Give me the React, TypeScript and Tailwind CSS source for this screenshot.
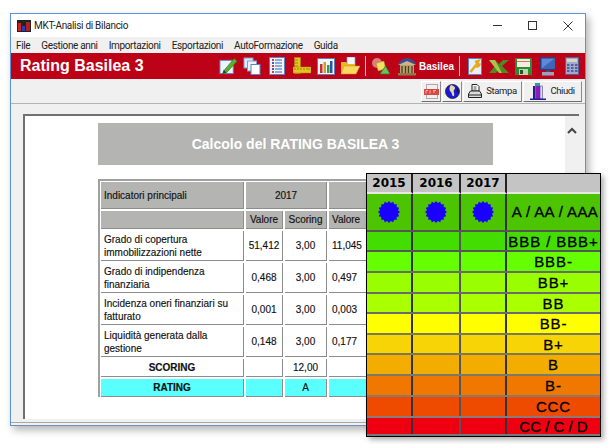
import React from "react";

const Star = () => {
  const pts: string[] = [];
  for (let i = 0; i < 32; i++) {
    const r = i % 2 === 0 ? 11 : 9.2;
    const a = (i * Math.PI) / 16;
    pts.push(`${12 + r * Math.sin(a)},${12 - r * Math.cos(a)}`);
  }
  return (
    <svg width="24" height="24" viewBox="0 0 24 24">
      <polygon points={pts.join(" ")} fill="#1a00ff" />
    </svg>
  );
};

const AppLogo = () => (
  <svg width="14" height="12" viewBox="0 0 14 12">
    <rect x="0" y="0" width="14" height="12" fill="#222" />
    <rect x="1" y="3" width="3" height="8" fill="#d02020" />
    <rect x="5" y="6" width="3" height="5" fill="#1f3fc0" />
    <rect x="9" y="2" width="4" height="9" fill="#b02020" />
  </svg>
);

const PencilIcon = () => (
  <svg width="19" height="18" viewBox="0 0 20 18">
    <rect x="1" y="3" width="14" height="14" fill="#eef4fb" stroke="#5b84c4" />
    <path d="M5 14 L16 1 L19 4 L8 16 L4 17 Z" fill="#58b030" stroke="#2c6a14" strokeWidth="0.6" />
    <path d="M4 17 L5 13 L8 16 Z" fill="#3a3a2a" />
  </svg>
);
const CopiesIcon = () => (
  <svg width="18" height="18" viewBox="0 0 18 18">
    <rect x="1" y="1" width="9" height="10" fill="#dfe9f7" stroke="#7d9fd3" />
    <rect x="4.5" y="4" width="9" height="10" fill="#eaf1fb" stroke="#7d9fd3" />
    <rect x="8" y="7.5" width="9" height="10" fill="#ffffff" stroke="#5b84c4" />
  </svg>
);
const ListIcon = () => (
  <svg width="16" height="18" viewBox="0 0 16 18">
    <rect x="0.5" y="0.5" width="15" height="17" fill="#eef4fb" stroke="#5b84c4" />
    {[3, 6, 9, 12, 15].map((y) => (
      <g key={y}>
        <rect x="3" y={y - 1} width="2" height="2" fill={y % 2 ? "#d04030" : "#3060c0"} />
        <rect x="6" y={y - 0.5} width="7" height="1" fill="#3060c0" />
      </g>
    ))}
  </svg>
);
const RulerIcon = () => (
  <svg width="18" height="18" viewBox="0 0 18 18">
    <rect x="1.5" y="0.5" width="6" height="16" fill="#e4c420" stroke="#a88a10" strokeWidth="0.5" />
    <rect x="0" y="10" width="18" height="6" fill="#e4c420" stroke="#a88a10" strokeWidth="0.5" />
    <path d="M2 11v2M5 11v2M8 11v2M11 11v2M14 11v2M16 11v2M2 3h3M2 6h3M2 9h3" stroke="#8a6e10" strokeWidth="0.7" />
  </svg>
);
const ChartIcon = () => (
  <svg width="18" height="17" viewBox="0 0 18 17">
    <rect x="0.5" y="0.5" width="17" height="16" fill="#f4f6fb" stroke="#5b7fb8" />
    <rect x="3" y="6" width="2.5" height="9" fill="#c03030" />
    <rect x="6.5" y="4" width="2.5" height="11" fill="#d0a020" />
    <rect x="10" y="7" width="2.5" height="8" fill="#30a040" />
    <rect x="13" y="3" width="2.5" height="12" fill="#3050b0" />
  </svg>
);
const FolderIcon = () => (
  <svg width="20" height="18" viewBox="0 0 20 18">
    <rect x="7" y="0" width="8" height="10" fill="#f4f7fc" stroke="#7d9fd3" strokeWidth="0.7" />
    <path d="M1 5h5l2 2h7v9H1Z" fill="#e8b828" />
    <path d="M1 17 L4 9 H20 L16 17 Z" fill="#fbd860" stroke="#c09818" strokeWidth="0.5" />
  </svg>
);
const ShapesIcon = () => (
  <svg width="20" height="18" viewBox="0 0 20 18">
    <circle cx="6" cy="6" r="5" fill="#d88078" />
    <rect x="6" y="5" width="8" height="8" fill="#f2e060" stroke="#a09030" strokeWidth="0.5" transform="rotate(-15 10 9)" />
    <path d="M9 17 L14.5 9 L19 17 Z" fill="#70c060" stroke="#2c7a24" strokeWidth="0.7" />
  </svg>
);
const BankIcon = () => (
  <svg width="20" height="19" viewBox="0 0 20 19">
    <path d="M1 8 C2 4 6 1 10 1 C14 1 18 4 19 8 Z" fill="#3e4a8a" />
    <path d="M1 8 L10 4 L19 8 Z" fill="#c8b888" />
    <rect x="3" y="8" width="14" height="8" fill="#b8a070" />
    <path d="M5 9v7M8.5 9v7M11.5 9v7M15 9v7" stroke="#4e3e20" strokeWidth="1.3" />
    <rect x="1" y="16" width="18" height="2.5" fill="#8e7a50" />
  </svg>
);
const WrenchIcon = () => (
  <svg width="14" height="17" viewBox="0 0 14 17">
    <rect x="0.5" y="0.5" width="13" height="16" fill="#e6effa" stroke="#5b84c4" />
    <path d="M2.5 14 L8 7 M7 4 L10.5 3 L9 6 L11.5 6.5 C11 8.5 9 9 8 8" stroke="#e8a818" strokeWidth="2.4" fill="none" />
  </svg>
);
const ExcelIcon = () => (
  <svg width="20" height="15" viewBox="0 0 20 15">
    <path d="M0 1h6l4 4 4-4h6l-7 6 7 7h-7l-3-4-3 4H0l6-7Z" fill="#4c8c24" />
    <path d="M0 1h6l7 13h-3Z" fill="#a8c44c" />
  </svg>
);
const FloppyIcon = () => (
  <svg width="17" height="17" viewBox="0 0 17 17">
    <rect x="0" y="0" width="17" height="17" fill="#2c8c34" />
    <rect x="2" y="1" width="13" height="8" fill="#f4ece0" />
    <rect x="2" y="3" width="13" height="1" fill="#e07060" />
    <rect x="4" y="11" width="9" height="6" fill="#b8d8b0" />
    <rect x="5" y="12" width="3" height="4" fill="#305030" />
  </svg>
);
const MonitorIcon = () => (
  <svg width="16" height="19" viewBox="0 0 16 19">
    <rect x="0" y="0" width="16" height="13" fill="#2c3a7c" />
    <rect x="1.5" y="1.5" width="13" height="10" fill="#5c8ad8" />
    <path d="M1.5 11.5 L14.5 1.5 V11.5 Z" fill="#3c66b8" />
    <rect x="6" y="13" width="4" height="2" fill="#454c78" />
    <rect x="2" y="15" width="12" height="3.5" fill="#9aa2c4" />
  </svg>
);
const CalcIcon = () => (
  <svg width="14" height="18" viewBox="0 0 14 18">
    <rect x="0.5" y="0.5" width="13" height="17" fill="#a4a8cc" stroke="#50609a" />
    <rect x="2" y="2" width="10" height="3" fill="#d8d8b8" />
    {[7, 10, 13].map((y) =>
      [2, 6, 10].map((x) => <rect key={`${x}-${y}`} x={x} y={y} width="2.5" height="2" fill="#50609a" />)
    )}
  </svg>
);
const PdfIcon = () => (
  <svg width="15" height="15" viewBox="0 0 15 15">
    <rect x="2.5" y="0.5" width="11" height="14" fill="#f2eef0" stroke="#b0a8b0" />
    <rect x="0" y="5" width="15" height="6" fill="#d84840" />
    <path d="M2 9.5V6.5h2M6 6.5v3M9 6.5h3M9 8h2" stroke="#f6d0d0" strokeWidth="0.8" fill="none" />
  </svg>
);
const GlobeIcon = () => (
  <svg width="15" height="15" viewBox="0 0 15 15">
    <circle cx="7.5" cy="7.5" r="7" fill="#1818d8" stroke="#202020" strokeWidth="0.8" />
    <path d="M6 1 C10 2 11 4 9 6 C8 8 10 9 9 12 C7 13 7 9 6 8 C4 7 4 3 6 1Z" fill="#e8d8a8" />
    <path d="M12 3 L14 7 L13 10 L11.5 7 Z" fill="#1c1c1c" />
  </svg>
);
const PrinterIcon = () => (
  <svg width="14" height="15" viewBox="0 0 14 15">
    <path d="M4 .5h5l2 2V7H4Z" fill="#fff" stroke="#222" />
    <path d="M5.5 3h3M5.5 5h3" stroke="#222" strokeWidth="0.8" />
    <path d="M2.5 7H11.5L13.5 10V13.5H.5V10Z" fill="#dcdcdc" stroke="#222" />
    <path d="M1 11h12" stroke="#222" />
  </svg>
);
const DoorIcon = () => (
  <svg width="16" height="17" viewBox="0 0 16 17">
    <rect x="5" y="0" width="5" height="3" fill="#2c9c9c" />
    <rect x="3" y="3" width="2.5" height="13" fill="#202080" />
    <rect x="5.5" y="3" width="4.5" height="13" fill="#8c18c8" />
    <rect x="10" y="3" width="2.5" height="13" fill="#d8d8e8" stroke="#303070" strokeWidth="0.5" />
    <rect x="0" y="15.5" width="16" height="1.5" fill="#2020a0" />
  </svg>
);

const menu = ["File", "Gestione anni", "Importazioni", "Esportazioni", "AutoFormazione", "Guida"];

const Btn = ({ w, children }: { w: string; children: React.ReactNode }) => (
  <div className={`${w} h-[21px] flex items-center justify-center gap-[4px] bg-[#f0f0f0] border border-t-white border-l-white border-r-[#8a8a8a] border-b-[#6e6e6e] text-[#222]`}>
    {children}
  </div>
);

const gridCols = "grid-cols-[143px_37px_42px_60px]";

const rows = [
  ["Grado di copertura", "immobilizzazioni nette", "51,412", "3,00", "11,045"],
  ["Grado di indipendenza", "finanziaria", "0,468", "3,00", "0,497"],
  ["Incidenza oneri finanziari su", "fatturato", "0,001", "3,00", "0,003"],
  ["Liquidità generata dalla", "gestione", "0,148", "3,00", "0,177"],
];

const Cell = ({ className = "", children }: { className?: string; children?: React.ReactNode }) => (
  <div className={`border-b border-r border-[#8c8c8c] flex items-center justify-center text-[10px] leading-[13px] text-[#111] [-webkit-text-stroke:0.15px_#111] ${className}`}>
    {children}
  </div>
);

const ratingRows: { label: string; bg: string; h: string; line: string; track: string }[] = [
  { label: "BBB / BBB+", bg: "bg-[#44dd00]", h: "h-[20px]", line: "border-[#555]", track: "tracking-[0.9px]" },
  { label: "BBB-", bg: "bg-[#66ff00]", h: "h-[21px]", line: "border-[#6a6a6a]", track: "tracking-[0.9px]" },
  { label: "BB+", bg: "bg-[#99ff00]", h: "h-[21px]", line: "border-[#6a6a6a]", track: "tracking-[0.9px]" },
  { label: "BB", bg: "bg-[#aaff00]", h: "h-[20px]", line: "border-[#6a6a6a]", track: "tracking-[0.9px]" },
  { label: "BB-", bg: "bg-[#ffff00]", h: "h-[21px]", line: "border-[#7a7a5a]", track: "tracking-[0.9px]" },
  { label: "B+", bg: "bg-[#f6d405]", h: "h-[20px]", line: "border-[#7a7a5a]", track: "tracking-[0.9px]" },
  { label: "B", bg: "bg-[#f2ad00]", h: "h-[21px]", line: "border-[#7a7a6a]", track: "tracking-[0.9px]" },
  { label: "B-", bg: "bg-[#f07800]", h: "h-[21px]", line: "border-[#8a7a6a]", track: "tracking-[0.9px]" },
  { label: "CCC", bg: "bg-[#ee4a00]", h: "h-[21px]", line: "border-[#8a7a7a]", track: "tracking-[0.9px]" },
  { label: "CC / C / D", bg: "bg-[#ee0010]", h: "h-[18px]", line: "border-transparent", track: "tracking-normal" },
];

const pGrid = "grid grid-cols-[46px_48px_46px_93px]";

export default function App() {
  return (
    <div className="relative w-[613px] h-[444px] bg-white overflow-hidden font-['Liberation_Sans',Arial,sans-serif]">
      <div className="ml-[10px] mt-[13px] w-[576px] h-[413px] flex flex-col border border-[#5b93d8] border-b-[#6c8fc0] bg-[#f0f0f0] shadow-[3px_4px_8px_rgba(0,0,0,0.3)]">
        {/* title bar */}
        <div className="h-[23px] bg-white flex items-center pl-[6px] shrink-0">
          <AppLogo />
          <span className="ml-[3px] text-[10px] tracking-[-0.3px] text-[#222] font-['Roboto',sans-serif] whitespace-nowrap">MKT-Analisi di Bilancio</span>
          <div className="ml-auto flex items-center mr-[12px] gap-[26px]">
            <div className="w-[9px] h-px bg-[#333]" />
            <div className="w-[9px] h-[9px] border border-[#333]" />
            <svg width="10" height="10" viewBox="0 0 10 10">
              <path d="M.5.5l9 9M9.5.5l-9 9" stroke="#333" strokeWidth="1" />
            </svg>
          </div>
        </div>
        {/* menu */}
        <div className="h-[16px] flex items-center pl-[5px] gap-[11px] text-[10px] tracking-[-0.35px] text-[#222] font-['Roboto',sans-serif] shrink-0 whitespace-nowrap">
          {menu.map((m) => (
            <span key={m}>{m}</span>
          ))}
        </div>
        {/* red band */}
        <div className="h-[26px] bg-[#bd0217] flex items-center shrink-0">
          <span className="pl-[9px] w-[208px] shrink-0 text-white font-bold text-[16px] whitespace-nowrap">Rating Basilea 3</span>
          <div className="flex items-center shrink-0">
            <PencilIcon />
            <div className="ml-[5px]"><CopiesIcon /></div>
            <div className="ml-[8px]"><ListIcon /></div>
            <div className="ml-[8px]"><RulerIcon /></div>
            <div className="ml-[6px]"><ChartIcon /></div>
            <div className="ml-[5px]"><FolderIcon /></div>
            <div className="ml-[5px] w-px h-[20px] bg-[#e0c8c8]" />
            <div className="ml-[5px]"><ShapesIcon /></div>
            <div className="ml-[6px]"><BankIcon /></div>
            <span className="ml-[2px] w-[33px] text-white font-bold text-[10px] whitespace-nowrap">Basilea</span>
            <div className="ml-[7px] w-px h-[20px] bg-[#e0c8c8]" />
            <div className="ml-[8px]"><WrenchIcon /></div>
            <div className="ml-[7px]"><ExcelIcon /></div>
            <div className="ml-[6px]"><FloppyIcon /></div>
            <div className="ml-[8px]"><MonitorIcon /></div>
            <div className="ml-[9px]"><CalcIcon /></div>
          </div>
        </div>
        {/* buttons */}
        <div className="h-[25px] flex items-center justify-end pr-[3px] gap-px border-b border-[#b4b4b4] shrink-0">
          <Btn w="w-[20px]"><PdfIcon /></Btn>
          <Btn w="w-[20px]"><GlobeIcon /></Btn>
          <Btn w="w-[59px]"><PrinterIcon /><span className="font-['Roboto',sans-serif] text-[9.5px] tracking-[-0.4px]">Stampa</span></Btn>
          <Btn w="w-[59px]"><DoorIcon /><span className="font-['Roboto',sans-serif] text-[9.5px] tracking-[-0.4px]">Chiudi</span></Btn>
        </div>
        {/* content */}
        <div className="flex-1 pl-[12px] pr-[6px] pt-[10px] pb-[2px] flex flex-col">
          <div className="flex-1 flex border-t-2 border-l-2 border-t-[#707070] border-l-[#707070] mb-[3px]">
            <div className="w-[541px] bg-white pl-[73px] pt-[7px] overflow-hidden">
              <div className="w-[395px] h-[42px] bg-[#b4b4b2] flex items-center justify-center text-white font-bold text-[14px]">
                Calcolo del RATING BASILEA 3
              </div>
              <div className="mt-[14px] border-t-2 border-l-2 border-[#a0a0a0] pl-px pt-px w-[290px]">
                <div className={`grid ${gridCols} gap-x-[2px] gap-y-[2px]`}>
                  <Cell className="bg-[#b4b4b2] h-[27px] !justify-start pl-[3px]">Indicatori principali</Cell>
                  <Cell className="bg-[#b4b4b2] h-[27px] col-span-2">2017</Cell>
                  <Cell className="bg-[#b4b4b2] h-[27px]" />
                  <Cell className="bg-[#b4b4b2] h-[18px]" />
                  <Cell className="bg-[#b4b4b2] h-[18px]">Valore</Cell>
                  <Cell className="bg-[#b4b4b2] h-[18px]">Scoring</Cell>
                  <Cell className="bg-[#b4b4b2] h-[18px] !justify-start pl-[3px]">Valore</Cell>
                  {rows.map((r) => (
                    <React.Fragment key={r[0]}>
                      <Cell className="h-[30px] !justify-start pl-[3px]">
                        <span>{r[0]}<br />{r[1]}</span>
                      </Cell>
                      <Cell className="h-[30px]">{r[2]}</Cell>
                      <Cell className="h-[30px]">{r[3]}</Cell>
                      <Cell className="h-[30px] !justify-start pl-[3px]">{r[4]}</Cell>
                    </React.Fragment>
                  ))}
                  <Cell className="h-[18px] font-bold">SCORING</Cell>
                  <Cell className="h-[18px]" />
                  <Cell className="h-[18px]">12,00</Cell>
                  <Cell className="h-[18px]" />
                  <Cell className="h-[18px] font-bold bg-[#5affff]">RATING</Cell>
                  <Cell className="h-[18px] bg-[#5affff]" />
                  <Cell className="h-[18px] bg-[#5affff]">A</Cell>
                  <Cell className="h-[18px] bg-[#5affff]" />
                </div>
              </div>
            </div>
            <div className="w-[14px] flex justify-center pt-[11px]">
              <svg width="10" height="7" viewBox="0 0 10 7">
                <path d="M1 6l4-4 4 4" fill="none" stroke="#444" strokeWidth="2" />
              </svg>
            </div>
          </div>
          <div className="h-px bg-[#a8a8a8] -ml-[12px] -mr-[6px] mt-auto" />
        </div>
      </div>

      {/* rating overlay */}
      <div className="absolute left-[366px] top-[173px] w-[235px] h-[264px] border border-black bg-[#777] shadow-[3px_3px_5px_rgba(0,0,0,0.3)] overflow-hidden font-['DejaVu_Sans',sans-serif] text-black">
        <div className={`${pGrid} h-[20px]`}>
          {["2015", "2016", "2017", ""].map((y, i) => (
            <div key={i} className={`bg-[#c4c4c4] flex items-center justify-center font-bold text-[12px] border-b-[2px] border-white/60 ${i < 3 ? "border-r-2 border-r-[#222]" : ""}`}>
              {y}
            </div>
          ))}
        </div>
        <div className={`${pGrid} h-[38px] border-b-2 border-[#555]`}>
          {[0, 1, 2].map((i) => (
            <div key={i} className="bg-[#4cc400] flex items-center justify-center border-r-2 border-[#333]"><Star /></div>
          ))}
          <div className="bg-[#4cc400] flex items-center justify-center pl-[3px] font-['Liberation_Sans',sans-serif] text-[15px] tracking-[0.4px] whitespace-nowrap [-webkit-text-stroke:0.3px_black]">A / AA / AAA</div>
        </div>
        {ratingRows.map((r) => (
          <div key={r.label} className={`${pGrid} ${r.h} border-b-2 ${r.line}`}>
            <div className={`${r.bg} border-r-2 border-[#333]`} />
            <div className={`${r.bg} border-r-2 border-[#555]`} />
            <div className={`${r.bg} border-r-2 border-[#333]`} />
            <div className={`${r.bg} ${r.track} flex items-center justify-center leading-none font-['Liberation_Sans',sans-serif] text-[15px] whitespace-nowrap [-webkit-text-stroke:0.3px_black]`}>{r.label}</div>
          </div>
        ))}
      </div>
    </div>
  );
}
